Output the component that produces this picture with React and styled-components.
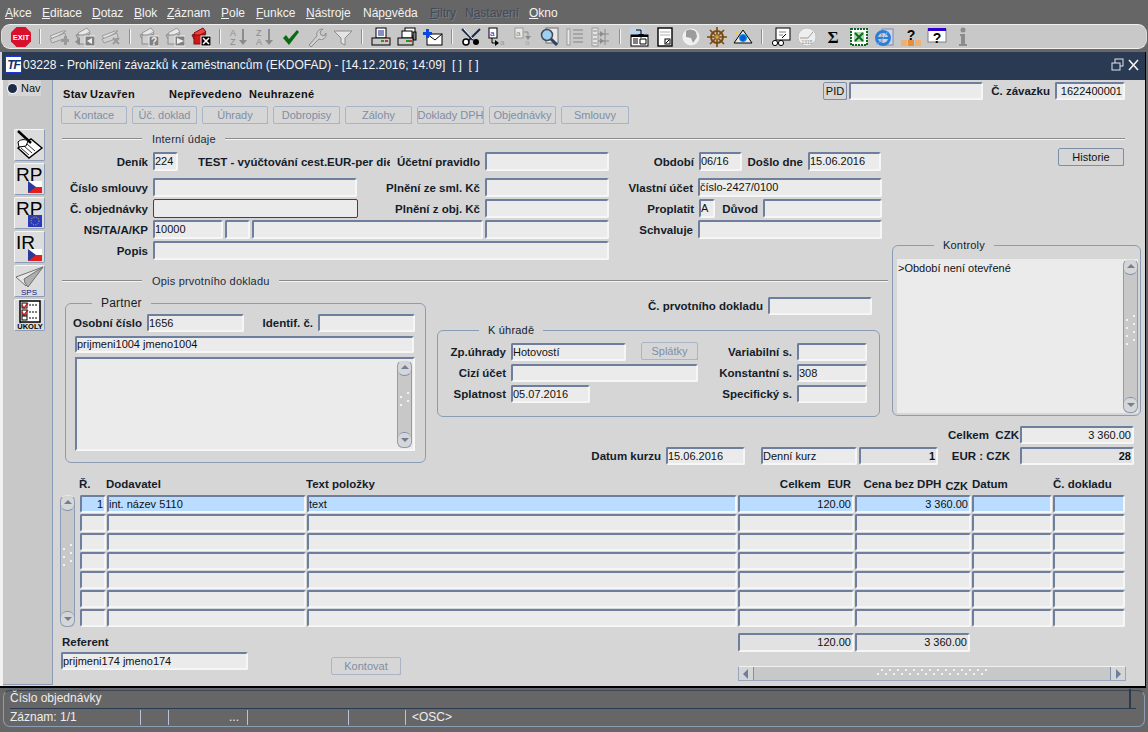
import React from "react";
import styled, { createGlobalStyle } from "styled-components";

const GlobalStyle = createGlobalStyle`
  html, body {
    margin: 0;
    padding: 0;
    width: 1148px;
    height: 732px;
    overflow: hidden;
    background: #666666;
    font-family: "Liberation Sans", Arial, sans-serif;
    font-size: 12px;
  }
`;

const Screen = styled.div`
  display: flex;
  flex-direction: column;
  width: 1148px;
  height: 732px;
  background: #666666;
`;

/* menu */
const MenuBar = styled.div`
  display: flex;
  height: 24px;
  align-items: center;
  padding-left: 5px;
  color: #f2f2f2;
  font-size: 12px;
`;

const MenuItem = styled.span`
  width: ${(p) => p.$w}px;
  flex: none;
  padding-top: 1px;
  color: ${(p) => (p.$off ? "#3f4a5c" : "#f2f2f2")};
  text-shadow: ${(p) => (p.$off ? "1px 1px 0 #7d7d7d" : "none")};
  u {
    text-underline-offset: 1px;
  }
`;

/* toolbar */
const ToolBar = styled.div`
  display: flex;
  align-items: center;
  box-sizing: border-box;
  height: 25px;
  margin: 0 1px;
  padding-left: 6px;
  background: #c8c8c8;
  border: 1px solid #d8d8d8;
  border-top-color: #f0f0f0;
  border-bottom-color: #f0f0f0;
  border-radius: 9px;
`;

const ToolIcon = styled.span`
  display: flex;
  flex: none;
  width: 26px;
  height: 22px;
  align-items: center;
  justify-content: center;
`;

const ToolSep = styled.span`
  flex: none;
  width: 2px;
  height: 15px;
  margin: 0 5px;
  background: #7f90ad;
  border-right: 1px solid #f4f4f4;
  box-sizing: border-box;
`;

/* window */
const Window = styled.div`
  display: flex;
  flex-direction: column;
  box-sizing: border-box;
  width: 1146px;
  height: 636px;
  margin-top: 3px;
  background: #d6d6d6;
  border-right: 1px solid #000000;
  border-bottom: 2px solid #000000;
`;

const TitleBar = styled.div`
  display: flex;
  align-items: center;
  flex: none;
  height: 28px;
  margin-left: 2px;
  padding: 0 4px 3px 3px;
  box-sizing: border-box;
  background: #2a3a52;
  color: #f4f4f4;
  font-size: 12px;
`;

const TitleLogo = styled.span`
  display: flex;
  flex: none;
  align-items: center;
  justify-content: center;
  box-sizing: border-box;
  width: 17px;
  height: 17px;
  margin-right: 1px;
  background: #ffffff;
  border: 1px solid #1a35d8;
  color: #12306e;
  font: italic bold 12px "Liberation Sans", sans-serif;
  letter-spacing: -1px;
`;

const TitleText = styled.span`
  flex: 1;
  white-space: pre;
`;

const WindowBody = styled.div`
  display: flex;
  flex: 1;
  min-height: 0;
  border-left: 3px solid #f2f2f2;
`;

const NavRail = styled.div`
  display: flex;
  flex-direction: column;
  flex: none;
  align-items: center;
  box-sizing: border-box;
  width: 50px;
  background: #c8c8c8;
  border-right: 1px solid #8a9cb8;
  border-bottom: 1px solid #8a9cb8;
  margin-bottom: 1px;
`;

const NavToggle = styled.div`
  display: flex;
  align-items: center;
  gap: 4px;
  box-sizing: border-box;
  width: 33px;
  height: 16px;
  margin: 0 10px 33px 4px;
  background: #d6d6d6;
  color: #111111;
  font-size: 11px;
`;

const RadioDot = styled.span`
  flex: none;
  box-sizing: border-box;
  width: 9px;
  height: 9px;
  border-radius: 50%;
  background: #1c2c48;
  box-shadow: 0 0 0 1px #f4f4f4;
`;

const RailButton = styled.div`
  display: flex;
  flex: none;
  align-items: center;
  justify-content: center;
  box-sizing: border-box;
  width: 31px;
  height: 32px;
  margin: 0 0 2px 4px;
  background: #dcdcdc;
  border: 1px solid;
  border-color: #f6f6f6 #8a9cb8 #8a9cb8 #f6f6f6;
  border-radius: 2px;
`;

const Content = styled.div`
  display: flex;
  flex-direction: column;
  flex: 1;
  min-width: 0;
  box-sizing: border-box;
  padding: 2px 4px 0 9px;
  color: #111111;
`;

const TopRow = styled.div`
  display: flex;
  align-items: center;
  height: 18px;
`;

const StateInfo = styled.div`
  display: flex;
  width: 761px;
  flex: none;
  padding-top: 6px;
  padding-left: 1px;
  box-sizing: border-box;
  font-weight: bold;
  font-size: 11px;
  letter-spacing: 0.3px;
`;

const StateItem = styled.span`
  flex: none;
  width: ${(p) => p.$w}px;
`;

const ActionRow = styled.div`
  display: flex;
  gap: 5px;
  margin: 6px 0 0 -1px;
`;

const Button = styled.div`
  display: flex;
  flex: none;
  align-items: center;
  justify-content: center;
  box-sizing: border-box;
  width: ${(p) => p.$w}px;
  height: 18px;
  margin-left: ${(p) => p.$ml || 0}px;
  margin-top: ${(p) => p.$mt || 0}px;
  background: #d6d6d6;
  border: 1px solid;
  border-color: ${(p) =>
    p.$active ? "#f2f2f2 #6d7f9c #6d7f9c #f2f2f2" : "#f2f2f2 #94a3ba #94a3ba #f2f2f2"};
  outline: 1px solid ${(p) => (p.$active ? "#7d8ea9" : "#a9b4c6")};
  outline-offset: -1px;
  border-radius: 2px;
  color: ${(p) => (p.$active ? "#111111" : "#7f8ea5")};
  font-size: 11px;
  white-space: nowrap;
`;

const SectionLine = styled.div`
  display: flex;
  align-items: center;
  height: 14px;
  width: ${(p) => p.$w}px;
  margin-top: ${(p) => p.$mt || 0}px;
  color: #1c2a40;
  font-size: 11px;
  letter-spacing: 0.2px;
`;

const SectionRule = styled.span`
  flex: ${(p) => (p.$w ? `0 0 ${p.$w}px` : 1)};
  height: 2px;
  box-sizing: border-box;
  background: #8a8a8a;
  border-bottom: 1px solid #f4f4f4;
`;

const SectionName = styled.span`
  padding: 0 9px 0 10px;
  white-space: nowrap;
`;

const FormGrid = styled.div`
  display: grid;
  grid-template-columns: 368px 458px 253px;
  grid-template-rows: 124px 25px 120px 47px;
  grid-template-areas:
    "fields fields side"
    "opis opis side"
    "partner middle side"
    "partner rates rates";
  margin-top: 2px;
`;

const FieldsArea = styled.div`
  grid-area: fields;
  display: flex;
  flex-direction: column;
  gap: 2px;
  padding-top: 4px;
`;

const OpisArea = styled.div`
  grid-area: opis;
  padding-top: 2px;
`;

const SideArea = styled.div`
  grid-area: side;
  display: flex;
  flex-direction: column;
`;

const MiddleArea = styled.div`
  grid-area: middle;
  display: flex;
  flex-direction: column;
`;

const PartnerArea = styled.div`
  grid-area: partner;
`;

const RatesArea = styled.div`
  grid-area: rates;
  display: flex;
  flex-direction: column;
  gap: 3px;
  padding-top: 9px;
`;

const FormRow = styled.div`
  display: flex;
  align-items: center;
  flex: none;
  height: ${(p) => p.$h || 19}px;
  margin-top: ${(p) => p.$mt || 0}px;
  margin-bottom: ${(p) => p.$mb || 0}px;
  margin-left: ${(p) => p.$ml || 0}px;
`;

const Label = styled.span`
  flex: none;
  box-sizing: border-box;
  width: ${(p) => p.$w}px;
  padding-right: ${(p) => p.$pr ?? 5}px;
  text-align: right;
  font-weight: bold;
  font-size: 11.5px;
  white-space: pre;
  color: #141c2a;
`;

const Field = styled.div`
  flex: none;
  box-sizing: border-box;
  width: ${(p) => p.$w}px;
  height: ${(p) => p.$h || 19}px;
  margin-left: ${(p) => p.$ml || 0}px;
  padding: 0 1px 0 0;
  background: ${(p) => (p.$selected ? "#b9dcff" : p.$dim ? "#e2e2e2" : "#ebebeb")};
  border-style: solid;
  border-width: ${(p) => (p.$required ? 1 : 2)}px;
  border-color: ${(p) =>
    p.$required ? "#e00000" : "#6d7f9c #f6f6f6 #f6f6f6 #6d7f9c"};
  border-radius: 2px;
  color: #111111;
  font-size: 11px;
  font-weight: ${(p) => (p.$bold ? "bold" : "normal")};
  line-height: ${(p) => (p.$h || 19) - 4}px;
  text-align: ${(p) => (p.$right ? "right" : "left")};
  white-space: nowrap;
  overflow: hidden;
`;

const DocName = styled.span`
  flex: none;
  width: 192px;
  margin-left: 20px;
  overflow: hidden;
  white-space: nowrap;
  font-weight: bold;
  font-size: 11.5px;
  color: #141c2a;
`;

const GroupBox = styled.div`
  position: relative;
  box-sizing: border-box;
  flex: none;
  width: ${(p) => p.$w}px;
  height: ${(p) => p.$h}px;
  margin: ${(p) => p.$mt || 0}px 0 0 ${(p) => p.$ml || 0}px;
  padding: ${(p) => p.$pad};
  border: 1px solid #8d9cb6;
  border-radius: 6px;
`;

const GroupTitle = styled.span`
  position: absolute;
  top: -8px;
  left: ${(p) => p.$left}px;
  padding: 0 9px;
  background: #d6d6d6;
  color: #141c2a;
  font-size: ${(p) => (p.$strong ? 12 : 11)}px;
  line-height: 14px;
  letter-spacing: 0.2px;
`;

const HistoryWrap = styled.div`
  margin-left: 170px;
  height: 17px;
`;

const ListBox = styled.div`
  display: flex;
  box-sizing: border-box;
  height: 100%;
  background: #ebebeb;
  font-size: 11px;
`;

const ListText = styled.div`
  flex: 1;
  padding: 3px 1px;
`;

const MemoBox = styled.div`
  display: flex;
  box-sizing: border-box;
  width: 340px;
  height: 94px;
  margin: 4px 0 0 2px;
  padding: 1px 1px 1px 0;
  background: #ebebeb;
  border: 2px solid;
  border-color: #6d7f9c #f6f6f6 #f6f6f6 #6d7f9c;
`;

const MemoFill = styled.div`
  flex: 1;
`;

/* scrollbars */
const VBar = styled.div`
  display: flex;
  flex-direction: column;
  flex: none;
  box-sizing: border-box;
  width: 15px;
  background: #c8c8c8;
  border-radius: 6px;
  border: 1px solid #8d9cb6;
  border-top-color: #e8e8e8;
`;

const VBtn = styled.div`
  display: flex;
  flex: none;
  align-items: center;
  justify-content: center;
  height: 14px;
  background: #d6d6d6;
  border-top: ${(p) => (p.$end ? "1px solid #7f90ad" : "none")};
  border-bottom: ${(p) => (p.$end ? "none" : "1px solid #7f90ad")};
  border-radius: 6px;
`;

const Thumb = styled.div`
  display: flex;
  flex: 1;
  min-height: 0;
  align-items: center;
  justify-content: center;
  padding-bottom: ${(p) => p.$lift || 0}px;
`;

const HBar = styled.div`
  display: flex;
  align-items: stretch;
  box-sizing: border-box;
  width: 388px;
  height: 15px;
  background: #c8c8c8;
  border: 1px solid #96a5bd;
  border-top-color: #f0f0f0;
`;

const HBtn = styled.div`
  display: flex;
  flex: none;
  align-items: center;
  justify-content: center;
  width: 14px;
  background: #d6d6d6;
  border-${(p) => (p.$end ? "left" : "right")}: 1px solid #7f90ad;
`;

const Arrow = ({ dir }) => {
  const pts = {
    up: "1,6 5,2 9,6",
    down: "1,3 9,3 5,7",
    left: "7,0 7,10 2,5",
    right: "3,0 3,10 8,5",
  }[dir];
  return (
    <svg width="10" height="10" viewBox="0 0 10 10">
      <polygon points={pts} fill="#6d7f9c" />
    </svg>
  );
};

const Grip = ({ cols, rows, stagger = 4 }) => (
  <svg width={(cols - 1) * 8 + stagger + 2} height={rows * 4 + 2}>
    {Array.from({ length: rows }).flatMap((_, r) =>
      Array.from({ length: cols }).map((_, c) => (
        <rect key={`${r}-${c}`} x={c * 8 + (r % 2 ? 0 : stagger)} y={r * 4} width="2" height="2" fill="#f2f2f2" />
      ))
    )}
  </svg>
);

const VerticalScroll = ({ grip, lift }) => (
  <VBar>
    <VBtn>
      <Arrow dir="up" />
    </VBtn>
    <Thumb $lift={lift}>
      <Grip cols={1} rows={grip * 2} stagger={7} />
    </Thumb>
    <VBtn $end>
      <Arrow dir="down" />
    </VBtn>
  </VBar>
);

/* table */
const TableHead = styled.div`
  display: grid;
  grid-template-columns: 26px 199px 430px 116px 116px 80px 72px;
  column-gap: 1px;
  height: 17px;
  margin: 14px 0 0 18px;
  font-weight: bold;
  font-size: 11.5px;
  color: #141c2a;
`;

const HeadCell = styled.span`
  display: flex;
  justify-content: ${(p) => (p.$end ? "flex-end" : "flex-start")};
  gap: ${(p) => p.$gap || 0}px;
  padding-right: ${(p) => p.$pr || 0}px;
  margin-left: ${(p) => p.$ml ?? -1}px;
  white-space: pre;
`;

const HeadUnit = styled.span`
  padding-top: ${(p) => (p.$low ? 2 : 0)}px;
  font-size: 11px;
`;

const TableWrap = styled.div`
  display: flex;
  gap: 5px;
  margin-left: -2px;
  height: 132px;
`;

const Rows = styled.div`
  display: flex;
  flex-direction: column;
  gap: 1px;
  width: 1045px;
`;

const Row = styled.div`
  display: grid;
  grid-template-columns: 26px 199px 430px 116px 116px 80px 72px;
  column-gap: 1px;
`;

const Lower = styled.div`
  display: flex;
  margin-left: -2px;
`;

const LowerLeft = styled.div`
  display: flex;
  flex: none;
  width: 677px;
  padding-top: 9px;
  box-sizing: border-box;
`;

const RefCol = styled.div`
  display: flex;
  flex-direction: column;
  align-items: flex-start;
`;

const RefLabel = styled.span`
  height: 16px;
  margin-left: 2px;
  font-weight: bold;
  font-size: 11.5px;
  color: #141c2a;
`;

const LowerRight = styled.div`
  display: flex;
  flex-direction: column;
  padding-top: 6px;
  margin-left: 1px;
`;

const Totals = styled.div`
  display: flex;
  gap: 1px;
  height: 19px;
  margin-bottom: 14px;
`;

/* status */
const StatusBar = styled.div`
  display: flex;
  flex-direction: column;
  box-sizing: border-box;
  height: 37px;
  margin: 2px 3px 0 3px;
  padding: 0 0 0 6px;
  border: 1px solid #8d9cb6;
  border-top-color: #3a4658;
  border-radius: 7px;
  color: #eeeeee;
  font-size: 12px;
`;

const StatusHint = styled.div`
  display: flex;
  justify-content: space-between;
  box-sizing: border-box;
  height: 18px;
  margin-right: 8px;
  border-bottom: 1px solid #2a3a52;
`;

const StatusCell = styled.span`
  width: 2px;
  margin: -2px 5px 0 0;
  background: #2a3a52;
`;

const StatusInfo = styled.div`
  display: flex;
  height: 17px;
  align-items: center;
`;

const StatusItem = styled.span`
  flex: none;
  box-sizing: border-box;
  width: ${(p) => p.$w}px;
  height: 15px;
  line-height: 15px;
  text-align: ${(p) => (p.$end ? "right" : "left")};
  padding-left: ${(p) => p.$pl || 0}px;
  padding-right: ${(p) => p.$pr || 0}px;
  border-right: ${(p) => (p.$open ? "none" : "1px solid #b9c4d6")};
  white-space: nowrap;
`;

/* toolbar pictures */
const Svg = ({ children, w = 20, h = 20 }) => (
  <svg width={w} height={h} viewBox={`0 0 ${w} ${h}`}>
    {children}
  </svg>
);

const Sheets = ({ red }) => (
  <>
    <polygon points="1,8 13,3 15,7 3,12" fill={red ? "#e02020" : "#d8d8d8"} stroke={red ? "#801010" : "#8c8c8c"} />
    <polygon points="3,6 12,1 15,5 5,10" fill={red ? "#f04040" : "#e8e8e8"} stroke={red ? "#801010" : "#9a9a9a"} />
    <rect x="3" y="8" width="11" height="9" fill={red ? "#d01818" : "#cfcfcf"} stroke={red ? "#801010" : "#8c8c8c"} />
  </>
);

const CornerBox = ({ children, fill = "#808080" }) => (
  <>
    <rect x="10" y="9" width="10" height="10" fill={fill} stroke="#f0f0f0" />
    {children}
  </>
);

const icons = {
  exit: (
    <Svg w={22} h={22}>
      <polygon points="6.5,1 15.5,1 21,6.5 21,15.5 15.5,21 6.5,21 1,15.5 1,6.5" fill="#d8102c" />
      <text x="11" y="14" textAnchor="middle" fill="#ffffff" fontSize="7.5" fontWeight="bold" fontFamily="Liberation Sans">EXIT</text>
    </Svg>
  ),
  add: (
    <Svg>
      <polygon points="1,9 14,4 17,4 4,12" fill="#e4e4e4" stroke="#9a9a9a" />
      <polygon points="1,12 16,6 17,11 3,16" fill="#d0d0d0" stroke="#9a9a9a" />
      <path d="M12 12h3v-3h3v3h2v3h-2v3h-3v-3h-3z" fill="#9a9a9a" />
    </Svg>
  ),
  back: (
    <Svg>
      <Sheets />
      <polygon points="0,15 5,10 5,18" fill="#8c8c8c" />
      <CornerBox><polygon points="17,11 17,17 12,14" fill="#f0f0f0" /></CornerBox>
    </Svg>
  ),
  del: (
    <Svg>
      <polygon points="1,9 14,4 17,4 4,12" fill="#e4e4e4" stroke="#9a9a9a" />
      <polygon points="1,12 16,6 17,11 3,16" fill="#d0d0d0" stroke="#9a9a9a" />
      <path d="M12 11l6 6M18 11l-6 6" stroke="#9a9a9a" strokeWidth="2" />
    </Svg>
  ),
  query: (
    <Svg>
      <Sheets />
      <CornerBox><text x="15" y="18" textAnchor="middle" fontSize="10" fontWeight="bold" fill="#f0f0f0" fontFamily="Liberation Sans">?</text></CornerBox>
    </Svg>
  ),
  run: (
    <Svg>
      <Sheets />
      <CornerBox><polygon points="12,11 19,14 12,17" fill="#f0f0f0" /></CornerBox>
    </Svg>
  ),
  cancel: (
    <Svg>
      <Sheets red />
      <CornerBox fill="#000000"><path d="M12 11l6 6M18 11l-6 6" stroke="#ffffff" strokeWidth="1.6" /></CornerBox>
    </Svg>
  ),
  sortAz: (
    <Svg>
      <text x="1" y="9" fontSize="9" fill="#8c8c8c" fontFamily="Liberation Sans">A</text>
      <text x="1" y="18" fontSize="9" fill="#8c8c8c" fontFamily="Liberation Sans">Z</text>
      <path d="M14 2v14" stroke="#8c8c8c" strokeWidth="2" />
      <polygon points="10,13 18,13 14,18" fill="#8c8c8c" />
    </Svg>
  ),
  sortZa: (
    <Svg>
      <text x="1" y="9" fontSize="9" fill="#8c8c8c" fontFamily="Liberation Sans">Z</text>
      <text x="1" y="18" fontSize="9" fill="#8c8c8c" fontFamily="Liberation Sans">A</text>
      <path d="M14 2v14" stroke="#8c8c8c" strokeWidth="2" />
      <polygon points="10,13 18,13 14,18" fill="#8c8c8c" />
    </Svg>
  ),
  check: (
    <Svg>
      <path d="M2 11l3-3 3 4 8-9 2 2-10 13z" fill="#0b6b12" />
    </Svg>
  ),
  wrench: (
    <Svg>
      <path d="M2 18l8-9c-1-3 1-7 6-7l-3 3 1 3 3 1 2-3c1 5-4 8-7 6l-8 8z" fill="#d0d0d0" stroke="#8c8c8c" />
    </Svg>
  ),
  funnel: (
    <Svg>
      <path d="M1 4h18l-7 7v7l-4-2v-5z" fill="#e4e4e4" stroke="#8c8c8c" />
    </Svg>
  ),
  printer: (
    <Svg>
      <rect x="5" y="1" width="10" height="10" fill="#ffffff" stroke="#000000" />
      <path d="M7 4h6M7 6h6M7 8h6" stroke="#0a1c8c" />
      <rect x="1" y="11" width="18" height="7" fill="#c8c8c8" stroke="#000000" />
      <rect x="10" y="13" width="3" height="2" fill="#18a018" />
      <rect x="14" y="13" width="3" height="2" fill="#e03020" />
    </Svg>
  ),
  printers: (
    <Svg>
      <rect x="8" y="1" width="10" height="8" fill="#ffffff" stroke="#000000" />
      <rect x="5" y="4" width="10" height="7" fill="#ffffff" stroke="#000000" />
      <rect x="16" y="5" width="3" height="8" fill="#808080" stroke="#000000" />
      <rect x="1" y="11" width="15" height="7" fill="#c8c8c8" stroke="#000000" />
      <rect x="9" y="13" width="3" height="2" fill="#18a018" />
      <rect x="12" y="13" width="3" height="2" fill="#e03020" />
    </Svg>
  ),
  mail: (
    <Svg>
      <rect x="4" y="7" width="15" height="11" fill="#ffffff" stroke="#000000" />
      <path d="M4 7l8 6 7-6" fill="none" stroke="#000000" />
      <path d="M3 2h3v3h3v3h-3v3h-3v-3h-3v-3h3z" fill="#0a46e0" />
    </Svg>
  ),
  cut: (
    <Svg>
      <path d="M1 2l11 11M19 2l-11 11" stroke="#1a2a48" strokeWidth="2" />
      <path d="M3 2l9 10" stroke="#ffffff" />
      <circle cx="5" cy="15" r="3" fill="#ffffff" stroke="#000000" strokeWidth="1.5" />
      <circle cx="15" cy="15" r="3" fill="#000000" />
    </Svg>
  ),
  copy: (
    <Svg>
      <rect x="2" y="1" width="8" height="10" fill="#ffffff" stroke="#000000" />
      <text x="3" y="9" fontSize="8" fill="#0a2ad0" fontFamily="Liberation Sans">a</text>
      <path d="M5 11v5h4" fill="none" stroke="#000000" />
      <polygon points="8,13 8,19 12,16" fill="#000000" />
      <text x="13" y="18" fontSize="8" fill="#9a9a9a" fontFamily="Liberation Sans">a</text>
    </Svg>
  ),
  paste: (
    <Svg>
      <rect x="2" y="1" width="8" height="10" fill="#e8e8e8" stroke="#9a9a9a" />
      <text x="3" y="9" fontSize="8" fill="#8c8c8c" fontFamily="Liberation Sans">a</text>
      <path d="M11 5h4v6" fill="none" stroke="#8c8c8c" />
      <polygon points="12,9 18,9 15,13" fill="#8c8c8c" />
      <text x="12" y="18" fontSize="8" fill="#aaaaaa" fontFamily="Liberation Sans">a</text>
    </Svg>
  ),
  search: (
    <Svg>
      <rect x="7" y="1" width="12" height="15" fill="#e8e8e8" stroke="#707070" />
      <circle cx="8" cy="8" r="5.5" fill="#9fd0f0" stroke="#404a58" strokeWidth="1.5" />
      <path d="M12 12l6 6" stroke="#30405c" strokeWidth="3" />
    </Svg>
  ),
  list: (
    <Svg>
      <rect x="2" y="2" width="3" height="16" fill="#e8e8e8" stroke="#9a9a9a" />
      <path d="M8 3h10M8 7h10M8 11h10M8 15h10" stroke="#9a9a9a" strokeWidth="1.5" />
    </Svg>
  ),
  tree: (
    <Svg>
      <rect x="1" y="1" width="6" height="18" fill="#e4e4e4" stroke="#9a9a9a" />
      <path d="M2 4h4M2 8h4M2 12h4M2 16h4M7 7h4M7 14h4M14 2v16M11 7h7M11 14h7" stroke="#8c8c8c" />
      <polygon points="9,4 13,7 9,10" fill="#8c8c8c" />
      <polygon points="9,11 13,14 9,17" fill="#8c8c8c" />
    </Svg>
  ),
  formDown: (
    <Svg>
      <rect x="1" y="1" width="14" height="9" fill="#b8d4f0" stroke="#d0d0d0" />
      <rect x="2" y="8" width="17" height="11" fill="#ffffff" stroke="#000000" />
      <rect x="2" y="8" width="17" height="2" fill="#000000" />
      <path d="M4 12h5M4 14h5M4 16h5M11 12h6v5h-6z" fill="none" stroke="#000000" />
      <path d="M7 3h5v5" fill="none" stroke="#000000" />
      <polygon points="9,7 15,7 12,11" fill="#000000" />
    </Svg>
  ),
  page: (
    <Svg>
      <rect x="3" y="1" width="14" height="18" fill="#ffffff" stroke="#000000" strokeWidth="1.4" />
      <path d="M5 5h10M5 8h10" stroke="#b0b0b0" />
      <rect x="10" y="12" width="5" height="5" fill="#ffffff" stroke="#000000" />
      <path d="M11 16l3-3" stroke="#000000" />
    </Svg>
  ),
  globe: (
    <Svg>
      <circle cx="10" cy="10" r="8.5" fill="#f0f0f0" />
      <path d="M5 4c4-3 8-1 10 1l1 5-4 6-2-5-5-1z" fill="#9c9c9c" />
    </Svg>
  ),
  wheel: (
    <Svg>
      <circle cx="10" cy="10" r="6" fill="none" stroke="#7a4a10" strokeWidth="2" />
      <path d="M10 0v20M0 10h20M3 3l14 14M17 3L3 17" stroke="#7a4a10" strokeWidth="1.6" />
      <circle cx="10" cy="10" r="2" fill="#d0a040" />
    </Svg>
  ),
  eye: (
    <Svg>
      <polygon points="10,3 19,16 1,16" fill="#e8e8e8" stroke="#000000" />
      <circle cx="10" cy="11" r="3.5" fill="#0a58d8" stroke="#00a0e0" />
      <path d="M3 5l2 2M17 5l-2 2M10 0v2" stroke="#f0d020" />
    </Svg>
  ),
  glasses: (
    <Svg>
      <rect x="5" y="1" width="14" height="12" fill="#ffffff" stroke="#000000" />
      <path d="M8 5h7M8 8h4" stroke="#808080" />
      <path d="M11 11l4-4" stroke="#000000" />
      <circle cx="4" cy="16" r="2.6" fill="#ffffff" stroke="#000000" />
      <circle cx="10" cy="16" r="2.6" fill="#ffffff" stroke="#000000" />
    </Svg>
  ),
  disc: (
    <Svg>
      <circle cx="10" cy="10" r="9" fill="#eeeeee" stroke="#c0c0c0" />
      <path d="M3 11h8l5-6" fill="none" stroke="#9c9c9c" />
      <text x="10" y="17" textAnchor="middle" fontSize="5" fill="#8c8c8c" fontFamily="Liberation Sans">1315</text>
    </Svg>
  ),
  sigma: (
    <Svg>
      <text x="10" y="16" textAnchor="middle" fontSize="17" fontWeight="bold" fill="#000000" fontFamily="Liberation Serif">Σ</text>
    </Svg>
  ),
  excel: (
    <Svg>
      <rect x="2" y="2" width="16" height="16" fill="#ffffff" stroke="#0a6a20" strokeWidth="2" strokeDasharray="2 1" />
      <rect x="5" y="5" width="10" height="10" fill="#b0d8b0" />
      <path d="M6 6l8 8M14 6l-8 8" stroke="#0a6a20" strokeWidth="2" />
    </Svg>
  ),
  ie: (
    <Svg>
      <rect x="7" y="2" width="11" height="16" fill="#d0d4e8" stroke="#8088b0" />
      <circle cx="8" cy="11" r="6.5" fill="none" stroke="#2a80d8" strokeWidth="3" />
      <path d="M2 11h12" stroke="#2a80d8" strokeWidth="2" />
      <path d="M1 17c2 1 7-5 12-13" fill="none" stroke="#70b0e8" />
    </Svg>
  ),
  helpBooks: (
    <Svg>
      <rect x="0" y="13" width="6" height="6" fill="#f0b070" />
      <rect x="7" y="13" width="6" height="6" fill="#e09040" />
      <rect x="14" y="13" width="6" height="6" fill="#f0b070" />
      <text x="10" y="13" textAnchor="middle" fontSize="14" fontWeight="bold" fill="#000000" fontFamily="Liberation Sans">?</text>
    </Svg>
  ),
  helpWin: (
    <Svg>
      <rect x="1" y="2" width="18" height="13" fill="#ffffff" stroke="#808080" />
      <rect x="1" y="1" width="18" height="3" fill="#3000d0" />
      <text x="10" y="16" textAnchor="middle" fontSize="14" fontWeight="bold" fill="#000000" fontFamily="Liberation Sans">?</text>
    </Svg>
  ),
  info: (
    <Svg>
      <circle cx="10" cy="3" r="2.5" fill="#8c8c8c" />
      <path d="M7 7h5v10h2v2H6v-2h2V9H7z" fill="#8c8c8c" />
    </Svg>
  ),
};

const toolbar = [
  "exit", "|", "add", "back", "del", "|", "query", "run", "cancel", "|", "sortAz", "sortZa", "check", "wrench", "funnel", "|",
  "printer", "printers", "mail", "|", "cut", "copy", "paste", "search", "list", "tree", "|",
  "formDown", "page", "globe", "wheel", "eye", "|", "glasses", "disc", "sigma", "excel", "ie", "helpBooks", "helpWin", "info",
];

/* side rail pictures */
const CzFlag = () => (
  <>
    <rect x="13" y="17" width="14" height="6" fill="#ffffff" />
    <rect x="13" y="23" width="14" height="6" fill="#e02020" />
    <polygon points="13,17 13,29 21,23" fill="#2a3a9c" />
  </>
);

const RailText = ({ children }) => (
  <text x="1" y="17" fontSize="19" fill="#000000" fontFamily="Liberation Sans">{children}</text>
);

const railIcons = [
  <Svg key="book" w={29} h={30}>
    <polygon points="3,18 16,9 27,18 14,28" fill="#ffffff" stroke="#000000" strokeWidth="1.4" />
    <path d="M6 18l8 7M9 16l8 7M12 14l8 7" stroke="#000000" strokeWidth="0.8" />
    <path d="M3 1l13 12" stroke="#000000" strokeWidth="2.4" />
    <path d="M3 12c3-3 7-3 10-1l-2 5-7 1z" fill="#ffffff" stroke="#000000" />
  </Svg>,
  <Svg key="rp-cz" w={29} h={30}><RailText>RP</RailText><CzFlag /></Svg>,
  <Svg key="rp-eu" w={29} h={30}>
    <RailText>RP</RailText>
    <rect x="13" y="17" width="14" height="12" fill="#2a3ab8" />
    <circle cx="20" cy="23" r="4" fill="none" stroke="#e8d820" strokeWidth="1" strokeDasharray="1 1.4" />
  </Svg>,
  <Svg key="ir-cz" w={29} h={30}><RailText>IR</RailText><CzFlag /></Svg>,
  <Svg key="sps" w={29} h={30}>
    <polygon points="1,11 28,1 11,20" fill="#e8e8e8" stroke="#707070" />
    <polygon points="9,13 28,1 13,21 10,17" fill="#b0b0b0" stroke="#707070" />
    <text x="14" y="29" textAnchor="middle" fontSize="8" fill="#101a80" fontFamily="Liberation Sans">SPS</text>
  </Svg>,
  <Svg key="tasks" w={29} h={30}>
    <rect x="5" y="1" width="20" height="21" fill="#ffffff" stroke="#000000" strokeWidth="1.5" />
    <rect x="7" y="3" width="5" height="5" fill="#ffffff" stroke="#000000" />
    <rect x="7" y="10" width="5" height="5" fill="#ffffff" stroke="#000000" />
    <path d="M7 5l2 3 4-5M7 12l2 3 4-5" fill="none" stroke="#d01010" strokeWidth="1.3" />
    <path d="M14 5h9M14 12h9M14 18h9" stroke="#000000" strokeDasharray="2 1" />
    <rect x="7" y="16" width="5" height="4" fill="#ffffff" stroke="#000000" />
    <text x="15" y="29" textAnchor="middle" fontSize="7.5" fontWeight="bold" fill="#000000" fontFamily="Liberation Sans">ÚKOLY</text>
  </Svg>,
];

const actions = [
  ["Kontace", 66], ["Úč. doklad", 65], ["Úhrady", 66], ["Dobropisy", 67],
  ["Zálohy", 67], ["Doklady DPH", 67], ["Objednávky", 67], ["Smlouvy", 68],
];

const emptyRows = [1, 2, 3, 4, 5, 6];
const colsSpare = [0, 1, 2, 3, 4, 5, 6];

const Menu = () => (
  <MenuBar>
    <MenuItem $w={37}><u>A</u>kce</MenuItem>
    <MenuItem $w={50}><u>E</u>ditace</MenuItem>
    <MenuItem $w={42}><u>D</u>otaz</MenuItem>
    <MenuItem $w={33}><u>B</u>lok</MenuItem>
    <MenuItem $w={54}><u>Z</u>áznam</MenuItem>
    <MenuItem $w={35}><u>P</u>ole</MenuItem>
    <MenuItem $w={50}><u>F</u>unkce</MenuItem>
    <MenuItem $w={57}><u>N</u>ástroje</MenuItem>
    <MenuItem $w={67}>Náp<u>o</u>věda</MenuItem>
    <MenuItem $w={35} $off><u>F</u>iltry</MenuItem>
    <MenuItem $w={64} $off>N<u>a</u>stavení</MenuItem>
    <MenuItem $w={40}><u>O</u>kno</MenuItem>
  </MenuBar>
);

const Tools = () => (
  <ToolBar>
    {toolbar.map((name, i) =>
      name === "|" ? <ToolSep key={i} /> : <ToolIcon key={i}>{icons[name]}</ToolIcon>
    )}
  </ToolBar>
);

function App() {
  return (
    <Screen>
      <GlobalStyle />
      <Menu />
      <Tools />
      <Window>
        <TitleBar>
          <TitleLogo>TF</TitleLogo>
          <TitleText>03228 - Prohlížení závazků k zaměstnancům (EKDOFAD) - [14.12.2016; 14:09]  [ ]  [ ]</TitleText>
          <Svg w={14} h={14}>
            <rect x="4" y="1" width="8" height="7" fill="none" stroke="#dfe4ee" />
            <rect x="1" y="5" width="8" height="7" fill="#2a3a52" stroke="#dfe4ee" />
          </Svg>
          <Svg w={16} h={14}>
            <path d="M4 2l9 10M13 2l-9 10" stroke="#f4f4f4" strokeWidth="1.6" />
          </Svg>
        </TitleBar>
        <WindowBody>
          <NavRail>
            <NavToggle>
              <RadioDot />
              Nav
            </NavToggle>
            {railIcons.map((icon, i) => (
              <RailButton key={i}>{icon}</RailButton>
            ))}
          </NavRail>
          <Content>
            <TopRow>
              <StateInfo>
                <StateItem $w={27}>Stav</StateItem>
                <StateItem $w={79}>Uzavřen</StateItem>
                <StateItem $w={80}>Nepřevedeno</StateItem>
                <StateItem $w={80}>Neuhrazené</StateItem>
              </StateInfo>
              <Button $w={24} $active>PID</Button>
              <Field $w={134} $h={18} $ml={2} />
              <Label $w={72}>Č. závazku</Label>
              <Field $w={70} $h={18} $right>1622400001</Field>
            </TopRow>
            <ActionRow>
              {actions.map(([text, w]) => (
                <Button key={text} $w={w}>{text}</Button>
              ))}
            </ActionRow>
            <SectionLine $mt={8} $w={1063}>
              <SectionRule $w={80} />
              <SectionName>Interní údaje</SectionName>
              <SectionRule />
            </SectionLine>
            <FormGrid>
              <FieldsArea>
                <FormRow $mb={5}>
                  <Label $w={91}>Deník</Label>
                  <Field $w={25}>224</Field>
                  <DocName>TEST - vyúčtování cest.EUR-per die</DocName>
                  <Label $w={95}>Účetní pravidlo</Label>
                  <Field $w={124} />
                  <Label $w={90}>Období</Label>
                  <Field $w={43}>06/16</Field>
                  <Label $w={66}>Došlo dne</Label>
                  <Field $w={73}>15.06.2016</Field>
                </FormRow>
                <FormRow>
                  <Label $w={91}>Číslo smlouvy</Label>
                  <Field $w={204} />
                  <Label $w={128}>Plnění ze sml. Kč</Label>
                  <Field $w={124} />
                  <Label $w={89}>Vlastní účet</Label>
                  <Field $w={184}>číslo-2427/0100</Field>
                </FormRow>
                <FormRow>
                  <Label $w={91}>Č. objednávky</Label>
                  <Field $w={205} $required />
                  <Label $w={127}>Plnění z obj. Kč</Label>
                  <Field $w={124} />
                  <Label $w={90}>Proplatit</Label>
                  <Field $w={16}>A</Field>
                  <Label $w={48}>Důvod</Label>
                  <Field $w={119} />
                </FormRow>
                <FormRow>
                  <Label $w={91}>NS/TA/A/KP</Label>
                  <Field $w={70}>10000</Field>
                  <Field $w={25} $ml={2} />
                  <Field $w={231} $ml={2} />
                  <Field $w={124} $ml={2} />
                  <Label $w={89}>Schvaluje</Label>
                  <Field $w={184} />
                </FormRow>
                <FormRow>
                  <Label $w={91}>Popis</Label>
                  <Field $w={456} />
                </FormRow>
              </FieldsArea>
              <OpisArea>
                <SectionLine $w={826}>
                  <SectionRule $w={80} />
                  <SectionName>Opis prvotního dokladu</SectionName>
                  <SectionRule />
                </SectionLine>
              </OpisArea>
              <SideArea>
                <HistoryWrap>
                  <Button $w={66} $active>Historie</Button>
                </HistoryWrap>
                <GroupBox $w={249} $h={171} $mt={80} $ml={4} $pad="13px 2px 2px 4px">
                  <GroupTitle $left={41}>Kontroly</GroupTitle>
                  <ListBox>
                    <ListText>&gt;Období není otevřené</ListText>
                    <VerticalScroll grip={4} lift={9} />
                  </ListBox>
                </GroupBox>
              </SideArea>
              <PartnerArea>
                <GroupBox $w={361} $h={160} $mt={6} $ml={3} $pad="10px 0 0 7px">
                  <GroupTitle $left={26} $strong>Partner</GroupTitle>
                  <FormRow $h={18}>
                    <Label $w={74}>Osobní číslo</Label>
                    <Field $w={97} $h={18}>1656</Field>
                    <Label $w={74}>Identif. č.</Label>
                    <Field $w={97} $h={18} />
                  </FormRow>
                  <FormRow $h={17} $ml={2} $mt={4}>
                    <Field $w={339} $h={17}>prijmeni1004 jmeno1004</Field>
                  </FormRow>
                  <MemoBox>
                    <MemoFill />
                    <VerticalScroll grip={2} lift={6} />
                  </MemoBox>
                </GroupBox>
              </PartnerArea>
              <MiddleArea>
                <FormRow $h={18}>
                  <Label $w={338}>Č. prvotního dokladu</Label>
                  <Field $w={104} $h={18} />
                </FormRow>
                <GroupBox $w={443} $h={87} $mt={15} $ml={7} $pad="12px 0 0 0">
                  <GroupTitle $left={41}>K úhradě</GroupTitle>
                  <FormRow $h={18} $mb={3}>
                    <Label $w={73}>Zp.úhrady</Label>
                    <Field $w={115} $h={18}>Hotovostí</Field>
                    <Button $w={57} $ml={15} $mt={-3}>Splátky</Button>
                    <Label $w={99}>Variabilní s.</Label>
                    <Field $w={70} $h={18} />
                  </FormRow>
                  <FormRow $h={18} $mb={3}>
                    <Label $w={73}>Cizí účet</Label>
                    <Field $w={187} $h={18} />
                    <Label $w={99}>Konstantní s.</Label>
                    <Field $w={70} $h={18}>308</Field>
                  </FormRow>
                  <FormRow $h={18}>
                    <Label $w={73}>Splatnost</Label>
                    <Field $w={79} $h={18}>05.07.2016</Field>
                    <Label $w={207}>Specifický s.</Label>
                    <Field $w={70} $h={18} />
                  </FormRow>
                </GroupBox>
              </MiddleArea>
              <RatesArea>
                <FormRow $h={18}>
                  <Label $w={590} $pr={1}>Celkem  CZK</Label>
                  <Field $w={114} $h={18} $right>3 360.00</Field>
                </FormRow>
                <FormRow $h={18}>
                  <Label $w={236}>Datum kurzu</Label>
                  <Field $w={79} $h={18}>15.06.2016</Field>
                  <Field $w={96} $h={18} $ml={16}>Denní kurz</Field>
                  <Field $w={79} $h={18} $ml={2} $dim $right $bold>1</Field>
                  <Label $w={72} $pr={0}>EUR : CZK</Label>
                  <Field $w={114} $h={18} $ml={10} $dim $right $bold>28</Field>
                </FormRow>
              </RatesArea>
            </FormGrid>
            <TableHead>
              <HeadCell>Ř.</HeadCell>
              <HeadCell>Dodavatel</HeadCell>
              <HeadCell>Text položky</HeadCell>
              <HeadCell $end $gap={7} $pr={3}>Celkem<HeadUnit>EUR</HeadUnit></HeadCell>
              <HeadCell $end $gap={4} $pr={3}>Cena bez DPH<HeadUnit $low>CZK</HeadUnit></HeadCell>
              <HeadCell $ml={0}>Datum</HeadCell>
              <HeadCell $ml={0}>Č. dokladu</HeadCell>
            </TableHead>
            <TableWrap>
              <VerticalScroll grip={3} lift={8} />
              <Rows>
                <Row>
                  <Field $h={18} $selected $right>1</Field>
                  <Field $h={18} $selected>int. název 5110</Field>
                  <Field $h={18} $selected>text</Field>
                  <Field $h={18} $selected $right>120.00</Field>
                  <Field $h={18} $selected $right>3 360.00</Field>
                  <Field $h={18} $selected />
                  <Field $h={18} $selected />
                </Row>
                {emptyRows.map((r) => (
                  <Row key={r}>
                    {colsSpare.map((c) => (
                      <Field key={c} $h={18} />
                    ))}
                  </Row>
                ))}
              </Rows>
            </TableWrap>
            <Lower>
              <LowerLeft>
                <RefCol>
                  <RefLabel>Referent</RefLabel>
                  <Field $w={187} $h={18} $ml={1}>prijmeni174 jmeno174</Field>
                </RefCol>
                <Button $w={70} $ml={83} $mt={21}>Kontovat</Button>
              </LowerLeft>
              <LowerRight>
                <Totals>
                  <Field $w={116} $h={19} $dim $right>120.00</Field>
                  <Field $w={115} $h={19} $dim $right>3 360.00</Field>
                </Totals>
                <HBar>
                  <HBtn><Arrow dir="left" /></HBtn>
                  <Thumb><Grip cols={14} rows={2} /></Thumb>
                  <HBtn $end><Arrow dir="right" /></HBtn>
                </HBar>
              </LowerRight>
            </Lower>
          </Content>
        </WindowBody>
      </Window>
      <StatusBar>
        <StatusHint>
          Číslo objednávky
          <StatusCell />
        </StatusHint>
        <StatusInfo>
          <StatusItem $w={131}>Záznam: 1/1</StatusItem>
          <StatusItem $w={28} />
          <StatusItem $w={79} $end $pr={8}>...</StatusItem>
          <StatusItem $w={101} />
          <StatusItem $w={57} />
          <StatusItem $w={200} $pl={6} $open>&lt;OSC&gt;</StatusItem>
        </StatusInfo>
      </StatusBar>
    </Screen>
  );
}

export default App;
